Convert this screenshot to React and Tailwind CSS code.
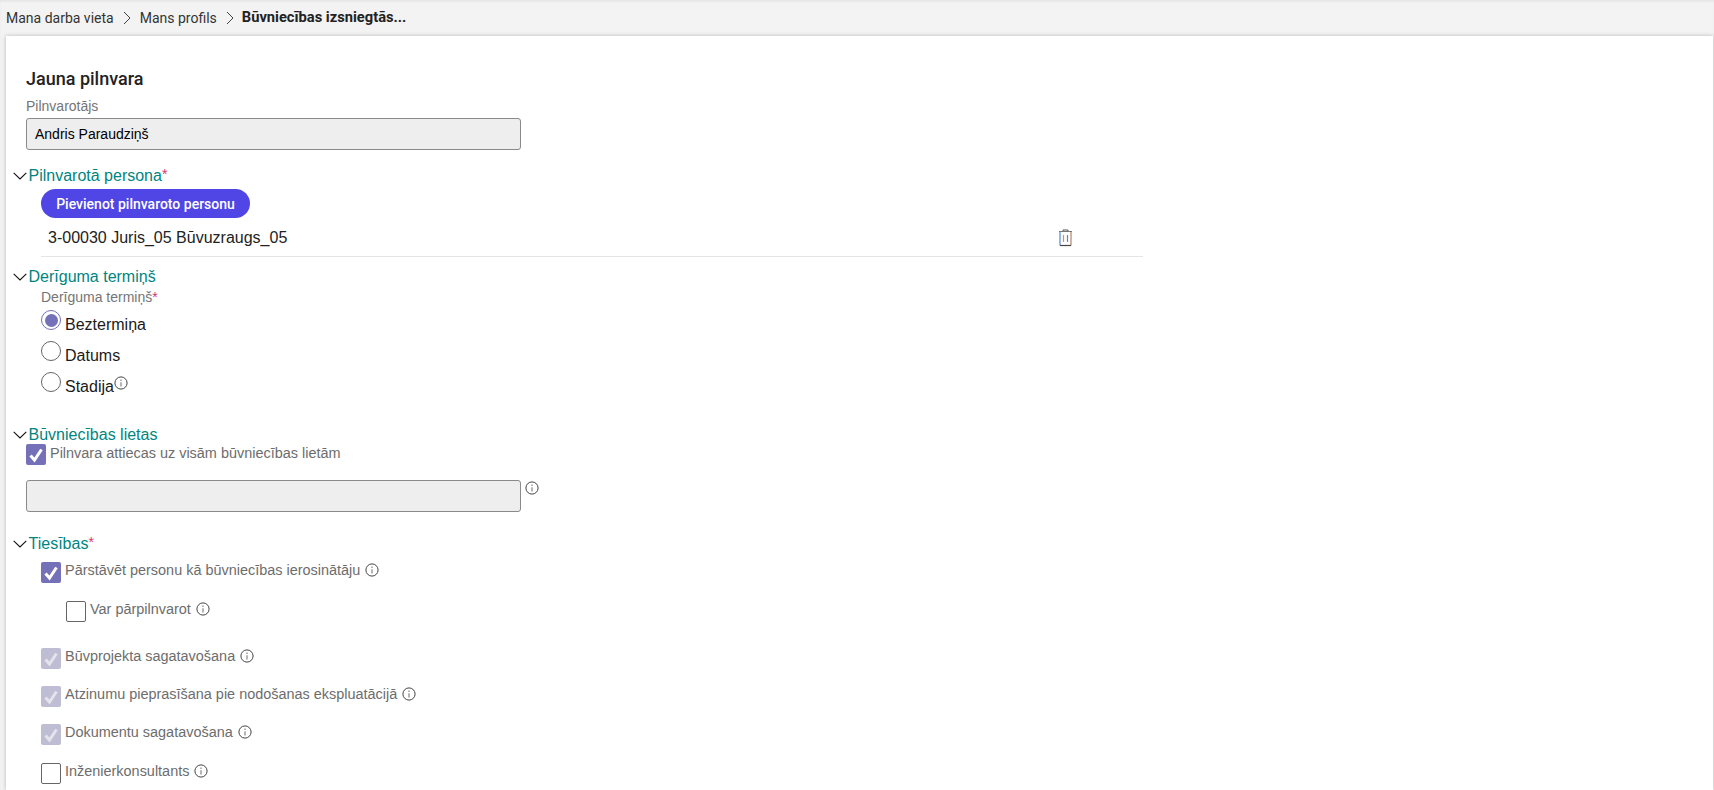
import React from 'react';

const Info = ({ className = '' }) => (
    <svg viewBox="0 0 14 14" className={`w-[14px] h-[14px] shrink-0 ${className}`} fill="none">
        <circle cx="7" cy="7" r="6.1" stroke="#444" strokeWidth="1" />
        <path d="M7 6.2V10.4" stroke="#777" strokeWidth="1.1" />
        <path d="M7 3.6V4.9" stroke="#777" strokeWidth="1.1" />
    </svg>
);

const Chevron = () => (
    <svg viewBox="0 0 14 8" className="w-[14px] h-[8px] shrink-0" fill="none">
        <path d="M0.7 0.8L7 7L13.3 0.8" stroke="#111" strokeWidth="1.1" />
    </svg>
);

const SectionTitle = ({ title, required, className = '' }) => (
    <div className={`flex items-center h-5 pl-[13px] ${className}`}>
        <Chevron />
        <span className="ml-[1.5px] text-base text-[#00857f]">{title}</span>
        {required && <span className="text-sm text-[#d6336c] -mt-1">*</span>}
    </div>
);

const Check = ({ state, className = '' }) => {
    const bg =
        state === 'on' ? 'bg-[#7471b9]' :
        state === 'disabled' ? 'bg-[#bfbdd3]' : 'bg-white border border-[#666]';
    return (
        <div className={`w-5 h-[21px] rounded-[2px] shrink-0 flex items-center justify-center ${bg} ${className}`}>
            {state !== 'off' && (
                <svg viewBox="0 0 20 21" className="w-5 h-[21px]" fill="none">
                    <path
                        d="M4.5 11.5L8.5 16L15.5 5.5"
                        stroke={state === 'on' ? '#fff' : '#e4e3ec'}
                        strokeWidth="3"
                    />
                </svg>
            )}
        </div>
    );
};

const Radio = ({ label, on, info }) => (
    <div className="flex h-[31px]">
        <div className={`w-5 h-5 rounded-full bg-white shrink-0 flex items-center justify-center border ${on ? 'border-[#7471b9]' : 'border-[#666]'}`}>
            {on && <div className="w-[13px] h-[13px] rounded-full bg-[#7471b9]"></div>}
        </div>
        <span className="ml-[4px] mt-[5px] text-base leading-5 text-[#1a1a1a]">{label}</span>
        {info && <Info className="mt-[4px]" />}
    </div>
);

const CheckRow = ({ state, label, className = '' }) => (
    <div className={`flex ${className}`}>
        <Check state={state} />
        <span className="ml-[4px] text-[14.45px] leading-4 text-[#6d6d6d]">{label}</span>
        <Info className="ml-[5px] mt-[1px]" />
    </div>
);

const ReadOnlyInput = ({ value }) => (
    <div className="w-[495px] h-8 bg-[#eeeeee] border border-[#8a8a8a] rounded-[3px] flex items-center px-2 text-sm text-black">
        {value}
    </div>
);

const App = () => {
    return (
        <div className="w-[1714px] h-[790px] overflow-hidden bg-[#f3f3f3] font-['Liberation_Sans',sans-serif] shadow-[inset_0_2px_2px_rgba(0,0,0,0.05)]">
            {/* Breadcrumb */}
            <div className="h-9 flex items-center pl-[6px] pb-[1px] text-sm text-[#333] font-['Roboto',sans-serif]">
                <span>Mana darba vieta</span>
                <svg viewBox="0 0 8 14" className="w-2 h-[14px] mx-[9px]" fill="none">
                    <path d="M1 1L7 7L1 13" stroke="#444" strokeWidth="1" />
                </svg>
                <span>Mans profils</span>
                <svg viewBox="0 0 8 14" className="w-2 h-[14px] ml-[9px] mr-[8px]" fill="none">
                    <path d="M1 1L7 7L1 13" stroke="#444" strokeWidth="1" />
                </svg>
                <span className="font-bold text-[14.7px] text-[#222]">Būvniecības izsniegtās...</span>
            </div>

            {/* Card */}
            <div className="ml-[6px] mr-[1px] h-[754px] bg-white shadow-[0_0_4px_rgba(0,0,0,0.25)] overflow-hidden">
                <div className="pt-[33px] pl-[20px] text-lg font-medium leading-5 text-[#222] font-['Roboto',sans-serif]">Jauna pilnvara</div>
                <div className="mt-[9px] pl-[20px] text-sm leading-4 text-[#757575]">Pilnvarotājs</div>
                <div className="mt-[4px] pl-[20px]"><ReadOnlyInput value="Andris Paraudziņš" /></div>

                <SectionTitle title="Pilnvarotā persona" required className="mt-[16px] -ml-[6px]" />
                <div className="mt-[3px] pl-[35px]">
                    <button className="h-[29px] w-[209px] rounded-full bg-[#4f46e5] text-white text-sm font-medium font-['Roboto',sans-serif]">
                        Pievienot pilnvaroto personu
                    </button>
                    <div className="w-[1102px] h-[39px] pt-[1px] border-b border-[#e5e5e5] flex items-center justify-between pl-[7px] pr-[70px] text-base text-[#222]">
                        <span>3-00030 Juris_05 Būvuzraugs_05</span>
                        <svg viewBox="0 0 15 18" className="w-[15px] h-[18px]" fill="none">
                            <path d="M5 2.5V1H10V2.5" stroke="#555" strokeWidth="1" />
                            <path d="M1 2.5H14" stroke="#777" strokeWidth="1" />
                            <path d="M2 3V16.5" stroke="#4f8ad8" strokeWidth="1.2" />
                            <path d="M13 3V16.5" stroke="#b9835f" strokeWidth="1.2" />
                            <path d="M2 16.5H13" stroke="#444" strokeWidth="1.2" />
                            <path d="M5.5 6V13" stroke="#e0903a" strokeWidth="1.2" />
                            <path d="M9.5 6V13" stroke="#4f8ad8" strokeWidth="1.2" />
                        </svg>
                    </div>
                </div>

                <SectionTitle title="Derīguma termiņš" className="mt-[10px] -ml-[6px]" />
                <div className="mt-[2px] pl-[35px]">
                    <div className="text-sm leading-4 text-[#757575]">Derīguma termiņš<span className="text-[#d6336c]">*</span></div>
                    <div className="mt-[5px]">
                        <Radio label="Beztermiņa" on />
                        <Radio label="Datums" />
                        <Radio label="Stadija" info />
                    </div>
                </div>

                <SectionTitle title="Būvniecības lietas" className="mt-[22px] -ml-[6px]" />
                <div className="-mt-[1px] pl-[20px]">
                    <div className="flex">
                        <Check state="on" />
                        <span className="ml-[4px] mt-[1px] text-[14.45px] leading-4 text-[#6d6d6d]">Pilnvara attiecas uz visām būvniecības lietām</span>
                    </div>
                    <div className="mt-[15px] flex">
                        <ReadOnlyInput value="" />
                        <Info className="ml-[4px] mt-[1px]" />
                    </div>
                </div>

                <SectionTitle title="Tiesības" required className="mt-[22px] -ml-[6px]" />
                <div className="mt-[8px] pl-[35px]">
                    <CheckRow state="on" label="Pārstāvēt personu kā būvniecības ierosinātāju" />
                    <CheckRow state="off" label="Var pārpilnvarot" className="mt-[18px] ml-[25px]" />
                    <CheckRow state="disabled" label="Būvprojekta sagatavošana" className="mt-[26px]" />
                    <CheckRow state="disabled" label="Atzinumu pieprasīšana pie nodošanas ekspluatācijā" className="mt-[17px]" />
                    <CheckRow state="disabled" label="Dokumentu sagatavošana" className="mt-[17px]" />
                    <CheckRow state="off" label="Inženierkonsultants" className="mt-[18px]" />
                </div>
            </div>
        </div>
    );
};

export default App;
